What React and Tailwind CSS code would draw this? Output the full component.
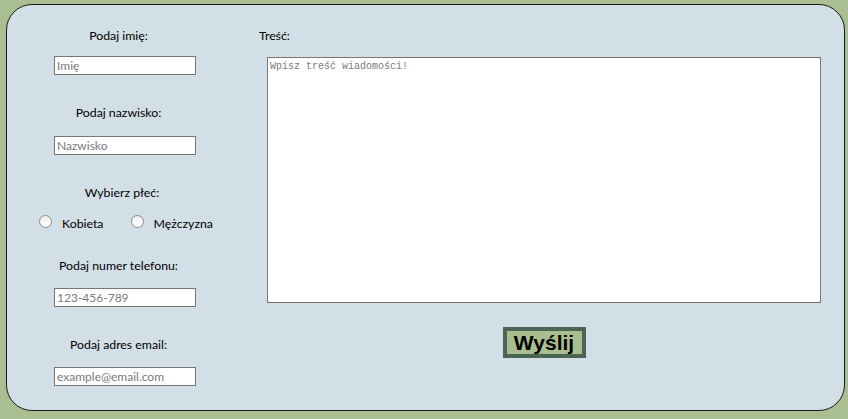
import React from "react";

function Field({ placeholder, mt }) {
  return (
    <div
      className={`${mt} ml-[47px] w-[142px] h-[19px] border border-[#767676] bg-white flex items-center pl-[2px] text-[12px] text-[#7a7a7a] leading-none`}
    >
      {placeholder}
    </div>
  );
}

function Radio() {
  return (
    <span className="block w-[13px] h-[13px] rounded-full border border-[#8a8a8a] bg-gradient-to-b from-[#f0f0f0] to-white" />
  );
}

export default function App() {
  return (
    <div
      className="w-[848px] h-[419px] bg-[#aabf91] pt-[4px] pl-[6px]"
      style={{ fontFamily: "Lato, 'Open Sans', sans-serif" }}
    >
      <div className="w-[839px] h-[407px] rounded-[26px] border border-[#1a1a1a] bg-[#d3dfe6] flex text-black">
        <div className="w-[224px] flex flex-col pt-[21px]">
          <div className="h-[20px] leading-[20px] text-[12.3px] text-center pr-[1px]">Podaj imię:</div>
          <Field placeholder="Imię" mt="mt-[10px]" />
          <div className="mt-[28px] h-[20px] leading-[20px] text-[12.3px] text-center pr-[1px]">Podaj nazwisko:</div>
          <Field placeholder="Nazwisko" mt="mt-[13px]" />
          <div className="mt-[28px] h-[20px] leading-[20px] text-[12.3px] text-center pl-[6px]">Wybierz płeć:</div>
          <div className="mt-[9px] h-[20px] flex items-start text-[12.3px] pl-[32px]">
            <span className="mt-[3px]"><Radio /></span>
            <span className="ml-[10px] mt-[4px] leading-[15px]">Kobieta</span>
            <span className="ml-[28px] mt-[3px]"><Radio /></span>
            <span className="ml-[9px] mt-[4px] leading-[15px]">Mężczyzna</span>
          </div>
          <div className="mt-[24px] h-[20px] leading-[20px] text-[12.3px] text-center pr-[1px]">Podaj numer telefonu:</div>
          <Field placeholder="123-456-789" mt="mt-[12px]" />
          <div className="mt-[28px] h-[20px] leading-[20px] text-[12.3px] text-center pr-[1px]">Podaj adres email:</div>
          <Field placeholder="example@email.com" mt="mt-[12px]" />
        </div>
        <div className="flex flex-col pt-[21px] pl-[28px]">
          <div className="h-[20px] leading-[20px] text-[12.3px]">Treść:</div>
          <div className="mt-[11px] ml-[8px] w-[554px] h-[246px] border border-[#767676] bg-white pt-[4px] pl-[2px]">
            <div
              className="text-[10px] text-[#7a7a7a] leading-[10px]"
              style={{ fontFamily: "'Liberation Mono', 'Courier New', monospace" }}
            >
              Wpisz treść wiadomości!
            </div>
          </div>
          <div className="ml-[8px] w-[554px] flex justify-center mt-[24px]">
            <div
              className="w-[83px] h-[31px] border-[4px] border-[#4a6553] bg-[#a9be8f] flex items-center justify-center font-bold text-[21px] leading-none"
              style={{ fontFamily: "'Liberation Sans', Arial, sans-serif" }}
            >
              Wyślij
            </div>
          </div>
        </div>
      </div>
    </div>
  );
}
